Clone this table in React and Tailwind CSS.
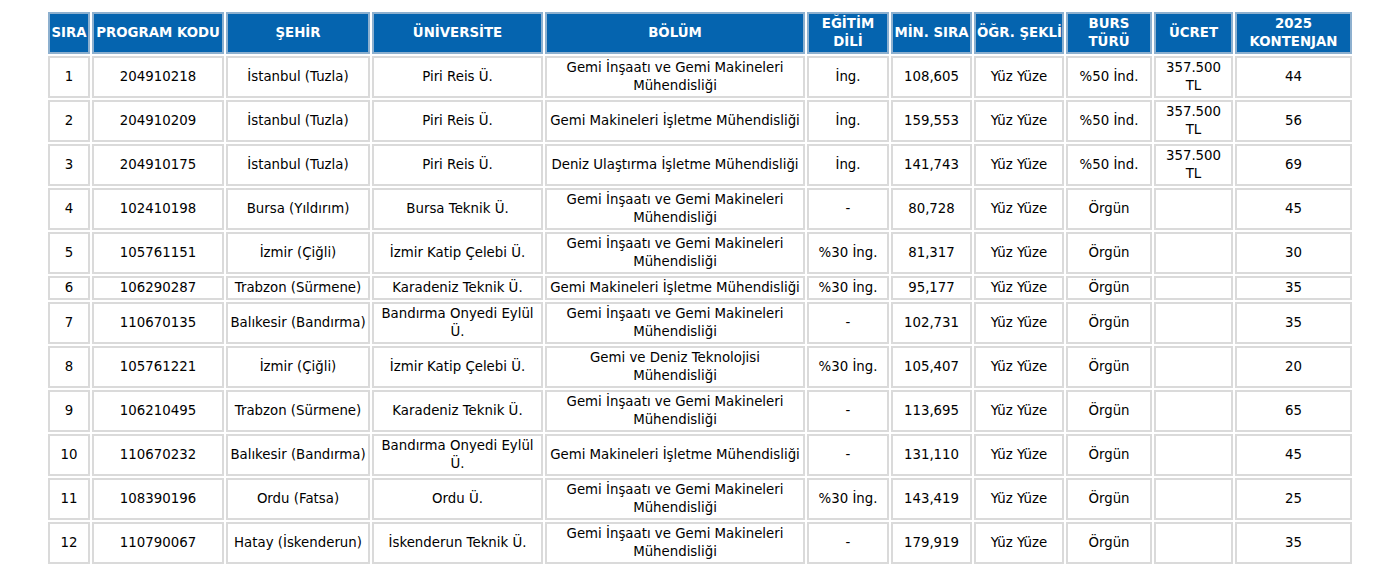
import React from 'react';

const columns = [
  { label: ['SIRA'], w: 'w-[42px]' },
  { label: ['PROGRAM KODU'], w: 'w-[132px]' },
  { label: ['ŞEHİR'], w: 'w-[144px]' },
  { label: ['ÜNİVERSİTE'], w: 'w-[171px]' },
  { label: ['BÖLÜM'], w: 'w-[260px]' },
  { label: ['EĞİTİM', 'DİLİ'], w: 'w-[82px]' },
  { label: ['MİN. SIRA'], w: 'w-[81px]' },
  { label: ['ÖĞR. ŞEKLİ'], w: 'w-[90px]' },
  { label: ['BURS', 'TÜRÜ'], w: 'w-[86px]' },
  { label: ['ÜCRET'], w: 'w-[79px]' },
  { label: ['2025', 'KONTENJAN'], w: 'w-[117px]' },
];

const GIGM = ['Gemi İnşaatı ve Gemi Makineleri', 'Mühendisliği'];
const GMIM = ['Gemi Makineleri İşletme Mühendisliği'];
const FEE = ['357.500', 'TL'];
const BANU = ['Bandırma Onyedi Eylül', 'Ü.'];

// sıra, kod, şehir, üniversite, bölüm, dil, min sıra, şekil, burs, ücret, kontenjan
const rows = [
  ['1', '204910218', 'İstanbul (Tuzla)', 'Piri Reis Ü.', GIGM, 'İng.', '108,605', 'Yüz Yüze', '%50 İnd.', FEE, '44'],
  ['2', '204910209', 'İstanbul (Tuzla)', 'Piri Reis Ü.', GMIM, 'İng.', '159,553', 'Yüz Yüze', '%50 İnd.', FEE, '56'],
  ['3', '204910175', 'İstanbul (Tuzla)', 'Piri Reis Ü.', 'Deniz Ulaştırma İşletme Mühendisliği', 'İng.', '141,743', 'Yüz Yüze', '%50 İnd.', FEE, '69'],
  ['4', '102410198', 'Bursa (Yıldırım)', 'Bursa Teknik Ü.', GIGM, '-', '80,728', 'Yüz Yüze', 'Örgün', '', '45'],
  ['5', '105761151', 'İzmir (Çiğli)', 'İzmir Katip Çelebi Ü.', GIGM, '%30 İng.', '81,317', 'Yüz Yüze', 'Örgün', '', '30'],
  ['6', '106290287', 'Trabzon (Sürmene)', 'Karadeniz Teknik Ü.', GMIM, '%30 İng.', '95,177', 'Yüz Yüze', 'Örgün', '', '35'],
  ['7', '110670135', 'Balıkesir (Bandırma)', BANU, GIGM, '-', '102,731', 'Yüz Yüze', 'Örgün', '', '35'],
  ['8', '105761221', 'İzmir (Çiğli)', 'İzmir Katip Çelebi Ü.', ['Gemi ve Deniz Teknolojisi', 'Mühendisliği'], '%30 İng.', '105,407', 'Yüz Yüze', 'Örgün', '', '20'],
  ['9', '106210495', 'Trabzon (Sürmene)', 'Karadeniz Teknik Ü.', GIGM, '-', '113,695', 'Yüz Yüze', 'Örgün', '', '65'],
  ['10', '110670232', 'Balıkesir (Bandırma)', BANU, GMIM, '-', '131,110', 'Yüz Yüze', 'Örgün', '', '45'],
  ['11', '108390196', 'Ordu (Fatsa)', 'Ordu Ü.', GIGM, '%30 İng.', '143,419', 'Yüz Yüze', 'Örgün', '', '25'],
  ['12', '110790067', 'Hatay (İskenderun)', 'İskenderun Teknik Ü.', GIGM, '-', '179,919', 'Yüz Yüze', 'Örgün', '', '35'],
];

// render array values as separate lines
const Lines = ({ value }) => {
  const parts = Array.isArray(value) ? value : [value];
  return parts.map((p, i) => (
    <React.Fragment key={i}>
      {i > 0 && <br />}
      {p}
    </React.Fragment>
  ));
};

export default function App() {
  return (
    <div className="bg-white w-full min-h-[573px] pt-[10px] font-['DejaVu_Sans',Verdana,sans-serif] text-[13.33px] leading-[18px] text-black">
      <table className="table-fixed border-separate border-spacing-[2px] w-[1307px] ml-[46px]">
        <thead>
          <tr>
            {columns.map((c, i) => (
              <th
                key={i}
                className={`${c.w} bg-[#0564af] text-white font-bold text-center align-middle whitespace-nowrap border-2 border-[#8db0cf] px-px py-px`}
              >
                <Lines value={c.label} />
              </th>
            ))}
          </tr>
        </thead>
        <tbody>
          {rows.map((r, ri) => (
            <tr key={ri}>
              {r.map((cell, ci) => (
                <td
                  key={ci}
                  className="text-center align-middle whitespace-nowrap border-2 border-[#dadada] px-px py-px"
                >
                  <Lines value={cell} />
                </td>
              ))}
            </tr>
          ))}
        </tbody>
      </table>
    </div>
  );
}
